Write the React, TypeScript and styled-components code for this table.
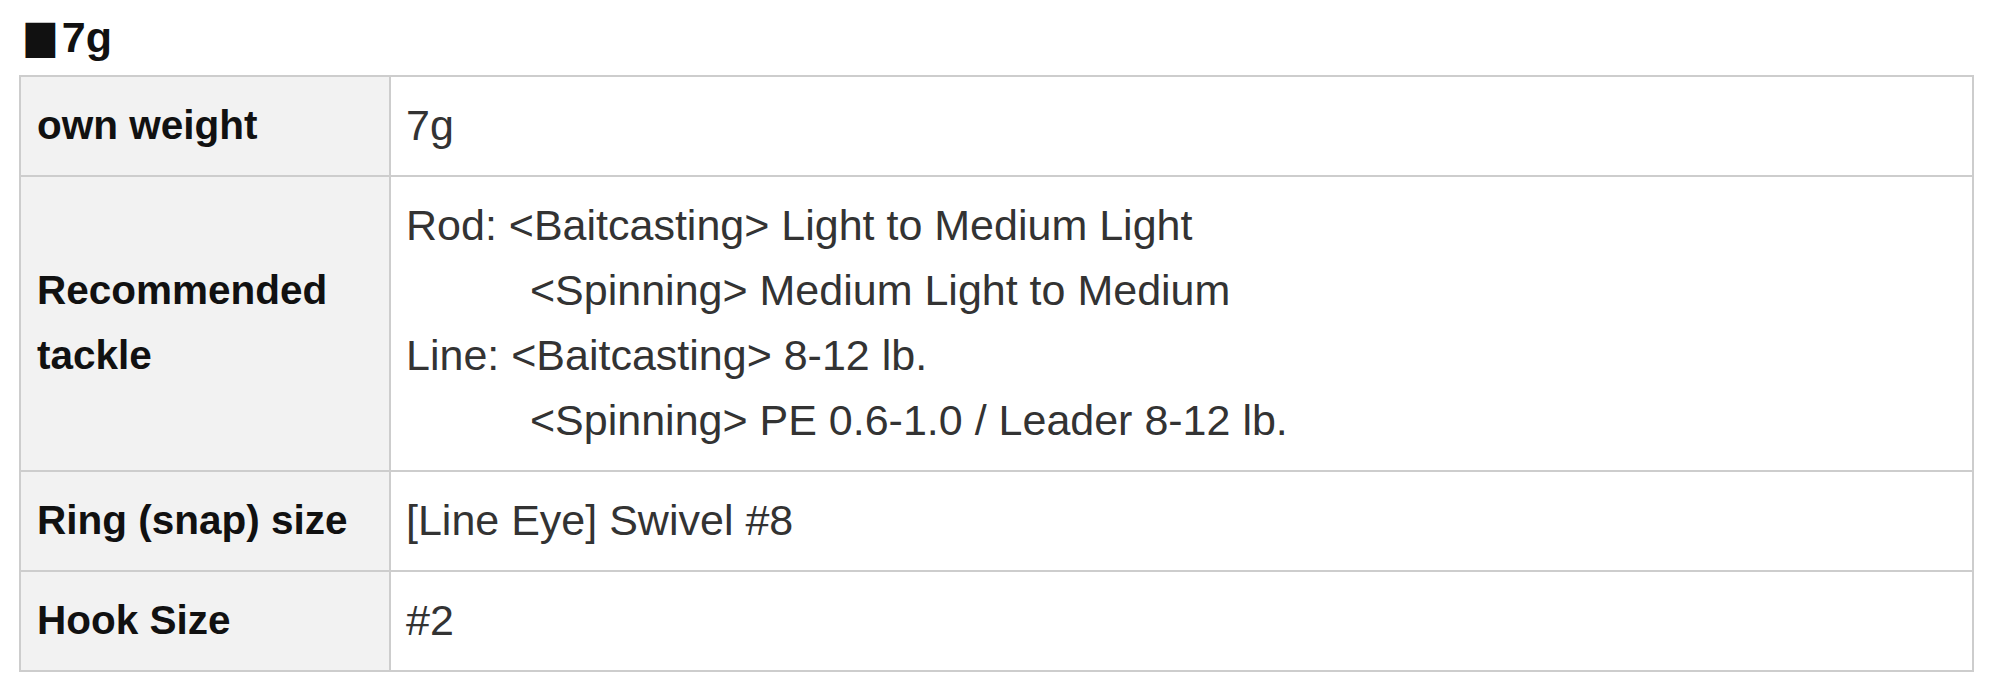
import React from "react";
import styled, { createGlobalStyle } from "styled-components";

const GlobalStyle = createGlobalStyle`
  html, body {
    margin: 0;
    padding: 0;
    background: #ffffff;
  }
  body {
    font-family: "Liberation Sans", Arial, sans-serif;
    color: #222;
  }
`;

const Page = styled.div`
  padding: 13px 26px 0 19px;
`;

const Heading = styled.h3`
  margin: 0 0 12px 0;
  display: flex;
  align-items: baseline;
  font-family: "Liberation Sans", Arial, sans-serif;
  font-weight: 700;
  font-size: 43px;
  line-height: 49px;
  color: #111;
`;

const Mark = styled.span`
  display: inline-block;
  font-family: "DejaVu Sans", sans-serif;
  font-size: 39px;
  margin-left: 3px;
  margin-right: 3px;
  transform: scaleY(1.18);
  transform-origin: 50% 80%;
`;

const SpecTable = styled.div`
  display: grid;
  grid-template-columns: 370px 1fr;
  border-top: 2px solid #cdcdcd;
  border-left: 2px solid #cdcdcd;
`;

const LabelCell = styled.div`
  display: flex;
  align-items: center;
  background: #f2f2f2;
  border-right: 2px solid #cdcdcd;
  border-bottom: 2px solid #cdcdcd;
  padding: 16px 16px 17px 16px;
  font-family: "Liberation Sans", Arial, sans-serif;
  font-weight: 700;
  font-size: 40.5px;
  line-height: 65px;
  color: #111;
`;

const ValueCell = styled.div`
  border-right: 2px solid #cdcdcd;
  border-bottom: 2px solid #cdcdcd;
  padding: 16px 16px 17px 15px;
  font-family: "Liberation Sans", Arial, sans-serif;
  font-size: 43px;
  line-height: 65px;
  color: #333;
`;

const Line = styled.div<{ $indent?: boolean }>`
  padding-left: ${(p) => (p.$indent ? "124px" : "0")};
  white-space: nowrap;
`;

type Row = { label: React.ReactNode; lines: { text: string; indent?: boolean }[] };

const rows: Row[] = [
  { label: "own weight", lines: [{ text: "7g" }] },
  {
    label: (
      <span>
        Recommended
        <br />
        tackle
      </span>
    ),
    lines: [
      { text: "Rod: <Baitcasting> Light to Medium Light" },
      { text: "<Spinning> Medium Light to Medium", indent: true },
      { text: "Line: <Baitcasting> 8-12 lb." },
      { text: "<Spinning> PE 0.6-1.0 / Leader 8-12 lb.", indent: true },
    ],
  },
  { label: "Ring (snap) size", lines: [{ text: "[Line Eye] Swivel #8" }] },
  { label: "Hook Size", lines: [{ text: "#2" }] },
];

export default function App() {
  return (
    <>
      <GlobalStyle />
      <Page>
        <Heading>
          <Mark>■</Mark>7g
        </Heading>
        <SpecTable>
          {rows.map((r, i) => (
            <React.Fragment key={i}>
              <LabelCell>{r.label}</LabelCell>
              <ValueCell>
                {r.lines.map((l, j) => (
                  <Line key={j} $indent={l.indent}>
                    {l.text}
                  </Line>
                ))}
              </ValueCell>
            </React.Fragment>
          ))}
        </SpecTable>
      </Page>
    </>
  );
}
